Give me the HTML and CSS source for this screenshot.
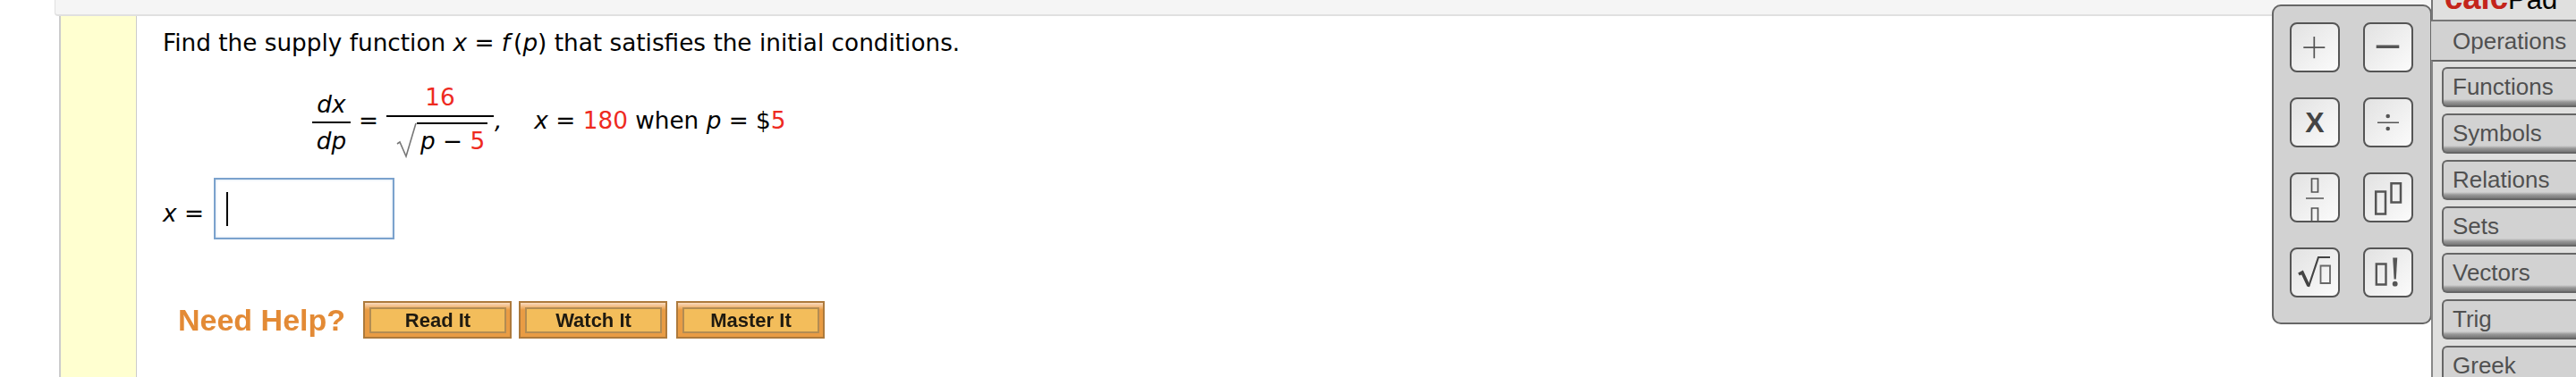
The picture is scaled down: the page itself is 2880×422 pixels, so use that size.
FILE: index.html
```html
<!DOCTYPE html>
<html lang="en">
<head>
    <meta charset="UTF-8">
    <meta name="viewport" content="width=device-width, initial-scale=1.0">
    <title>Supply function question</title>
    <link rel="stylesheet" href="styles.css">
</head>
<body>
    <div class="page">
        <div class="topbar"></div>
        <div class="question">
            <div class="marker"></div>
            <div class="content">
                <p class="prompt">Find the supply function <i>x</i> = <i class="fn">f</i>(<i>p</i>) that satisfies the initial conditions.</p>

                <div class="equation">
                    <span class="frac small">
                        <span class="num"><i>dx</i></span>
                        <span class="den"><i>dp</i></span>
                    </span>
                    <span class="eq">=</span>
                    <span class="frac wide">
                        <span class="num red">16</span>
                        <span class="den">
                            <svg class="radical" width="24" height="40" viewBox="0 0 24 40"><path d="M2 24L5 22L12 38L23 1" fill="none" stroke="#777" stroke-width="1.6"/></svg>
                            <span class="radicand"><i>p</i> &minus; <span class="red">5</span></span>
                        </span>
                    </span>
                    <span class="comma"><i>,</i></span>
                    <span class="cond"><i>x</i> = <span class="red">180</span> when <i>p</i> = $<span class="red">5</span></span>
                </div>

                <div class="answer">
                    <span class="answer-label"><i>x</i> =</span>
                    <div class="answer-box"><span class="caret"></span></div>
                </div>

                <div class="help">
                    <span class="help-label">Need Help?</span>
                    <button class="help-btn read"><span>Read It</span></button>
                    <button class="help-btn watch"><span>Watch It</span></button>
                    <button class="help-btn master"><span>Master It</span></button>
                </div>
            </div>
        </div>
    </div>

    <div class="calcpad">
        <div class="keys">
            <div class="key">
                <svg width="52" height="52" viewBox="0 0 52 52"><path d="M25.300 14V38.300M13.300 26.200H37.300" stroke="#555" stroke-width="1.700"/></svg>
            </div>
            <div class="key">
                <svg width="52" height="52" viewBox="0 0 52 52"><path d="M12.700 25.300H38.300" stroke="#555" stroke-width="3.400"/></svg>
            </div>
            <div class="key key-times">X</div>
            <div class="key">
                <svg width="52" height="52" viewBox="0 0 52 52"><path d="M14 26.300H38" stroke="#555" stroke-width="1.500"/><circle cx="25.700" cy="19" r="2.300" fill="#555"/><circle cx="25.700" cy="33" r="2.300" fill="#555"/></svg>
            </div>
            <div class="key">
                <svg width="52" height="52" viewBox="0 0 52 52"><path d="M22.500 5H29.500V20H22.500ZM22.500 53V38H29.500V53" fill="none" stroke="#555" stroke-width="1.700"/><path d="M16 27H36" stroke="#555" stroke-width="1.700"/></svg>
            </div>
            <div class="key">
                <svg width="52" height="52" viewBox="0 0 52 52"><path d="M12.200 19.500H23V44.500H12.200ZM29.500 10.200H40V31.500H29.500Z" fill="none" stroke="#555" stroke-width="2.500"/></svg>
            </div>
            <div class="key">
                <svg width="52" height="52" viewBox="0 0 52 52"><path d="M8 28L12 26L19 41" fill="none" stroke="#444" stroke-width="3.600"/><path d="M19 42L30 9H43" fill="none" stroke="#444" stroke-width="2.200"/><path d="M32.500 18.500H43V38H32.500Z" fill="none" stroke="#666" stroke-width="1.800"/></svg>
            </div>
            <div class="key">
                <svg width="52" height="52" viewBox="0 0 52 52"><path d="M12.800 16.500H23.500V39.500H12.800Z" fill="none" stroke="#555" stroke-width="2.400"/><path d="M31.200 9.500H36.200L34.800 33.500H32.600Z" fill="#555"/><circle cx="33.700" cy="38.700" r="2.900" fill="#555"/></svg>
            </div>
        </div>
        <div class="pad-side">
            <div class="pad-logo"><span><b>calc</b>Pad</span></div>
            <div class="tab-open">Operations</div>
            <div class="tabs">
                <div class="tab">Functions</div>
                <div class="tab">Symbols</div>
                <div class="tab">Relations</div>
                <div class="tab">Sets</div>
                <div class="tab">Vectors</div>
                <div class="tab">Trig</div>
                <div class="tab">Greek</div>
            </div>
        </div>
    </div>
</body>
</html>
```

FILE: styles.css
```css
html, body {
    margin: 0;
    height: 422px;
    overflow: hidden;
    background-color: white;
}
body {
    font-family: "DejaVu Sans", Verdana, sans-serif;
    font-size: 26.3px;
    color: black;
    position: relative;
}
.page {
    padding-left: 61px;
    padding-right: 160px;
}
.topbar {
    height: 18px;
    box-sizing: border-box;
    background-color: #f5f5f5;
    border: 1px solid #e0e0e0;
    border-top: none;
    border-bottom-width: 2px;
    border-radius: 0 0 4px 4px;
}
.question {
    display: flex;
    height: 404px;
    margin-left: 5px;
}
.marker {
    width: 84px;
    background-color: #ffffd0;
    border-left: 2px solid #ccc;
    border-right: 1px solid #ccc;
}
.content {
    padding-left: 29px;
    flex: 1;
}
.prompt {
    margin: 0;
    padding-top: 12px;
    line-height: 37px;
}
.fn {
    margin-right: 4px;
}
.red {
    color: #ee2a1f;
}
.equation {
    display: flex;
    align-items: flex-start;
    margin-left: 167px;
    margin-top: 21px;
    height: 88px;
}
.frac {
    display: flex;
    flex-direction: column;
    align-items: center;
}
.frac .num {
    border-bottom: 2px solid black;
    width: 100%;
    text-align: center;
}
.frac.small {
    width: 43px;
    margin-top: 11px;
}
.frac.small .num {
    line-height: 37px;
}
.frac.small .den {
    line-height: 40px;
}
.eq, .comma, .cond {
    line-height: 37px;
    margin-top: 29px;
}
.eq {
    width: 40px;
    text-align: center;
}
.frac.wide {
    width: 120px;
}
.frac.wide .num {
    padding-top: 2px;
    line-height: 39px;
}
.frac.wide .den {
    display: flex;
    align-items: flex-start;
    margin-top: 6px;
    align-self: flex-start;
    margin-left: 10px;
}
.radicand {
    border-top: 2px solid black;
    line-height: 38px;
    padding: 0 3px 0 4px;
}
.comma {
    margin-left: 1px;
}
.cond {
    margin-left: 36px;
}
.answer {
    display: flex;
    align-items: center;
    margin-top: 23px;
}
.answer-label {
    width: 56.5px;
    margin-top: 11px;
}
.answer-box {
    width: 202px;
    height: 69px;
    box-sizing: border-box;
    border: 2px solid #7ba2cd;
    box-shadow: inset 0 0 3px #c6d8ec;
    background-color: white;
    display: flex;
    align-items: center;
    padding-left: 12px;
}
.caret {
    width: 2px;
    height: 38px;
    background-color: black;
}
.help {
    display: flex;
    align-items: center;
    margin-top: 69px;
    margin-left: 17px;
}
.help-label {
    font-family: "Liberation Sans", Arial, sans-serif;
    font-weight: bold;
    font-size: 34px;
    color: #e38a35;
    width: 207px;
    filter: blur(0.6px);
}
.help-btn {
    height: 42px;
    padding: 5px 4px 4px 5px;
    box-sizing: border-box;
    background: linear-gradient(#fbdcc0, #e99c44 8px);
    border: 2px solid #ad7a3c;
    border-radius: 0;
    display: flex;
}
.help-btn span {
    flex: 1;
    box-sizing: border-box;
    background-color: #f3bd5b;
    border: 2px solid #b38c52;
    font-family: "Liberation Sans", Arial, sans-serif;
    font-weight: bold;
    font-size: 22px;
    line-height: 26px;
    color: #1f1a10;
    filter: blur(0.4px);
}
.read {
    width: 166px;
    margin-right: 8px;
}
.watch {
    width: 166px;
    margin-right: 10px;
}
.master {
    width: 166px;
}

/* floating math palette */
.calcpad {
    position: absolute;
    top: 0;
    right: 0;
    width: 340px;
    height: 422px;
    display: flex;
    font-family: "Liberation Sans", Arial, sans-serif;
}
.keys {
    width: 179px;
    height: 358px;
    flex: none;
    margin-top: 5px;
    margin-right: -1px;
    box-sizing: border-box;
    background-color: #d2d2d2;
    border: 2px solid #666;
    border-radius: 10px;
    padding: 18px 0 0 18px;
    display: grid;
    grid-template-columns: 56px 56px;
    grid-auto-rows: 56px;
    column-gap: 26px;
    row-gap: 28px;
}
.key {
    box-sizing: border-box;
    border: 2px solid #555;
    border-radius: 8px;
    background: linear-gradient(135deg, #e2e2e2, #fbfbfb);
    display: flex;
    align-items: center;
    justify-content: center;
    overflow: hidden;
}
.key-times {
    font-size: 32px;
    font-weight: bold;
    color: #444;
}
.pad-side {
    flex: 1;
    min-width: 0;
    position: relative;
    display: flex;
    flex-direction: column;
}
.pad-logo {
    height: 24px;
    flex: none;
    box-sizing: border-box;
    background-color: #e0e0df;
    border-left: 2px solid #777;
    border-bottom: 2px solid #777;
    padding-left: 13px;
    font-size: 31px;
    line-height: 20px;
    color: black;
    overflow: hidden;
}
.pad-logo span {
    display: block;
    margin-top: -12px;
}
.pad-logo b {
    font-size: 36.5px;
    color: #c4251b;
}
.tab-open {
    height: 43px;
    flex: none;
    box-sizing: border-box;
    background-color: #d2d2d2;
    padding: 6px 0 0 24px;
    font-size: 26px;
    line-height: 32px;
    color: #505050;
}
.tabs {
    flex: 1;
    min-height: 0;
    overflow: hidden;
    background-color: #e0e0df;
    border-left: 2px solid #888;
    border-top: 2px solid #666;
    padding: 6px 0 0 10px;
    display: flex;
    flex-direction: column;
    gap: 7px;
}
.tab {
    height: 45px;
    flex: none;
    box-sizing: border-box;
    background: linear-gradient(#d2d2d2 calc(100% - 7px), #999 calc(100% - 4px), #777);
    border: 2px solid #666;
    border-right: none;
    border-radius: 6px 0 0 6px;
    padding-left: 10px;
    font-size: 26px;
    line-height: 40px;
    color: #505050;
}
```
